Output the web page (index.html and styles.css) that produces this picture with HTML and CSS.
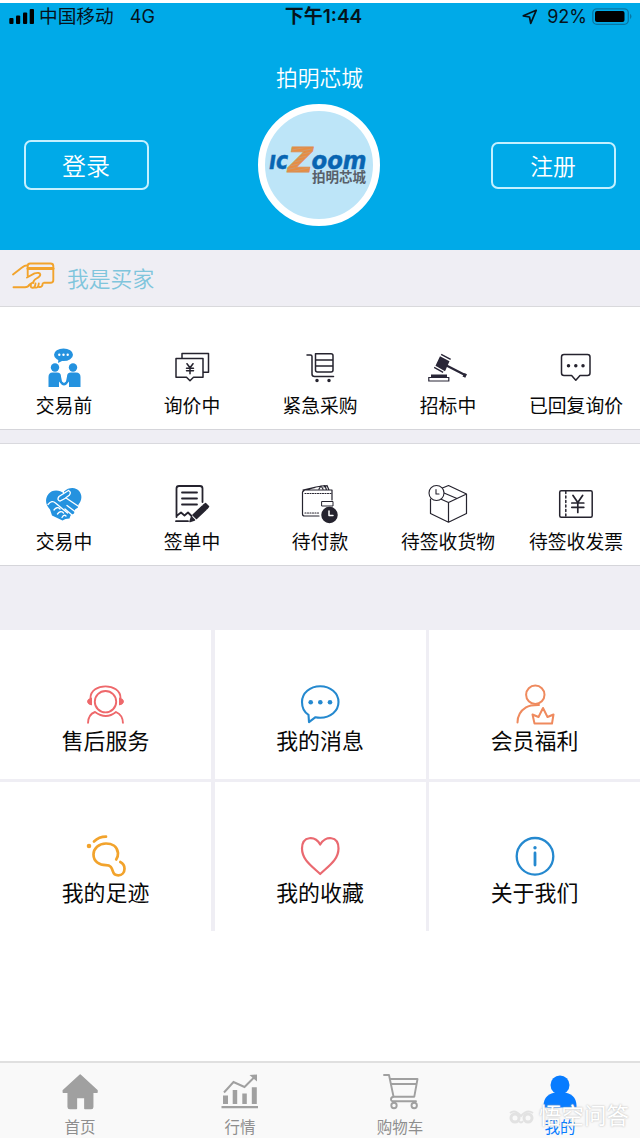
FILE: index.html
```html
<!DOCTYPE html>
<html lang="zh-CN">
<head>
<meta charset="utf-8">
<title>拍明芯城</title>
<link rel="stylesheet" href="styles.css">
</head>
<body>
<div class="app">
  <header class="hero">
    <div class="status">
      <div class="status-side">
        <svg class="signal" width="26" height="17" viewBox="9 7 26 17"><rect x="9.300" y="17" width="4.200" height="6" rx="1"/><rect x="16" y="14.500" width="4.200" height="8.500" rx="1"/><rect x="23" y="11.500" width="4.200" height="11.500" rx="1"/><rect x="29.700" y="8" width="4.300" height="15" rx="1"/></svg>
        <span class="carrier">中国移动</span><span class="network">4G</span>
      </div>
      <div class="clock">下午1:44</div>
      <div class="status-side status-right">
        <svg width="16" height="16" viewBox="524 8 16 16"><path d="M538.200 9.300 525.300 14.800 531.500 16 532.700 22.300Z" fill="none" stroke="#06131b" stroke-width="1.700" stroke-linejoin="round"/></svg>
        <span class="percent">92%</span>
        <svg width="41" height="18" viewBox="592 7 41 18"><rect x="592.800" y="7.800" width="35.500" height="15.500" rx="4" fill="none" stroke="#0876a3" stroke-width="1.300"/><rect x="595" y="10" width="29.500" height="11" rx="2" fill="#000"/><path d="M630 12.800q3 2.500 0 5.500z" fill="#0876a3"/></svg>
      </div>
    </div>
    <h1 class="title">拍明芯城</h1>
    <div class="account">
      <button class="btn">登录</button>
      <div class="avatar">
        <svg width="108" height="108" viewBox="265 111 108 108">
          <defs><pattern id="stripes" width="3" height="3" patternUnits="userSpaceOnUse" patternTransform="rotate(-12)"><rect width="3" height="3" fill="#e88d42"/><rect width="3" height="1" fill="#d09a6c"/></pattern></defs>
          <text class="logo-blue" x="269" y="169" font-size="25" textLength="19" lengthAdjust="spacingAndGlyphs">ıc</text>
          <text class="logo-blue" x="311.500" y="169" font-size="25" textLength="55" lengthAdjust="spacingAndGlyphs">oom</text>
          <text class="logo-z" x="288" y="171.500" font-size="33" fill="url(#stripes)" textLength="25" lengthAdjust="spacingAndGlyphs">Z</text>
          <text class="logo-cn" x="312" y="182.300" font-size="13.500">拍明芯城</text>
        </svg>
      </div>
      <button class="btn btn-register">注册</button>
    </div>
  </header>

  <div class="role">
    <svg width="44" height="32" viewBox="11 261 44 32" fill="none" stroke="#f2a32c" stroke-width="1.900" stroke-linecap="round" stroke-linejoin="round"><path d="M27.700 275.500V266q0-2.500 2.500-2.500h20.300q2.800 0 2.800 2.500v14.200q0 2.500-2.800 2.500H44M13 274.500l9-7q2.500-2.300 5.500-2.300M13.500 287.300h11.500q3 0 4.500-2.800l4-2.500M27 277.500l7.500-4.200q5.500-1.300 5.800 1.200 0 2-3.800 4-3 1.500-3.300 4.500M31 284.500q-1 3 1.500 3.300t3-4.300M34.800 287.300q3.500 1.500 4-3.800M39 287q3.500.5 3.700-3.500"/><path d="M28 268.500h25" stroke-width="3"/></svg>
    <span>我是买家</span>
  </div>

  <section class="orders">
    <div class="order"><svg viewBox="40 345 48 46" fill="#2492df"><ellipse cx="63.500" cy="354.800" rx="9.500" ry="6.300"/><path d="m58.500 359-.5 4 5-2.500z"/><g fill="#fff"><circle cx="59.300" cy="354.800" r="1.200"/><circle cx="63.500" cy="354.800" r="1.200"/><circle cx="67.700" cy="354.800" r="1.200"/></g><circle cx="55" cy="367.500" r="4.200"/><circle cx="73" cy="367.500" r="4.200"/><path d="M48.500 387V377q0-4.500 4-4.500h4.500q4 0 4 4l1 5 2 1.500 2-1.500 1-5q0-4 4-4h5q4.500 0 4.500 4.500v10H69V381.500l-2.500 3q-2.500 2-5 0L59 381.500v5.500z"/></svg><span>交易前</span></div>
    <div class="order"><svg viewBox="168 345 48 46" class="line"><path d="M182 357.500v-4h26.500v18.700H204M176 358.500h27v18.700h-9.500L190 380.700l-3.500-3.500H176zM187 363.700l3 4 3-4M190 367.700v6M186.500 368.200h7M186.500 370.700h7"/></svg><span>询价中</span></div>
    <div class="order"><svg viewBox="296 345 48 46" class="line"><path d="M307 355h3.500q1.500 0 1.500 1.500V374q0 2.500 2.500 2.500H333.500M315.500 353.700H331q2 0 2 2V370q0 2-2 2H317.500q-2 0-2-2zM315.500 360H333M315.500 366H333"/><circle cx="317" cy="380.500" r="1" fill="#25232e"/><circle cx="329" cy="380.500" r="1" fill="#25232e"/></svg><span>紧急采购</span></div>
    <div class="order"><svg viewBox="424 345 48 46" fill="#292637"><path d="m440 356.300 9.500 5-4.500 10-9.500-5.500zM441.500 353.800l9.500 5-.7 1.200-9.500-5zM434.500 366.800l9 5-.7 1.200-9-5zM447 364.500l18.500 9.500-1 2-18.500-9.500zM464.500 373l2.500 1.200-1.700 3.600-2.800-1.400zM431 374.500h16v2.500h-16z"/><path d="M428.800 377.500h20v3.500h-20z" fill="none" stroke="#292637" stroke-width="1.200"/></svg><span>招标中</span></div>
    <div class="order"><svg viewBox="552 345 48 46" class="line"><path d="M564 354.500h23.500q2.500 0 2.500 2.500v16q0 2.500-2.500 2.500H580l-4.200 4.800-4.200-4.800H564q-2.500 0-2.500-2.500v-16q0-2.500 2.500-2.500z"/><g fill="#25232e"><circle cx="568.500" cy="365.700" r="1"/><circle cx="575.800" cy="365.700" r="1"/><circle cx="583" cy="365.700" r="1"/></g></svg><span>已回复询价</span></div>
  </section>

  <section class="orders orders-active">
    <div class="order"><svg viewBox="40 481 48 46"><path d="M64 491.500c5-5 12.500-4.500 15.500 0 3.500 5 1.500 10-1 13l-.5 3-3 2-1 4-3.500 2-1 3-4 .5-3 1.500-10.500-5-2-6c-5-5-5-11-1.500-15.500 3.500-4.500 11-4.500 15.500-.5z" fill="#2492df"/><g fill="none" stroke="#fff" stroke-width="1.300" stroke-linecap="round"><path d="m68.500 490.500-9.500 6q-2.500 3.500 1 4.500l6-3 13.500 9M48 504.500q4-5 7.500-1.500l12 10M54 510q3-4 6-1M57.500 514q3-4 6-1M62 517.500q2-3.500 4-1.500M67 505.500l8 6M65 509l7 6M68.500 490.500q3 1.500 1 4.500l-4 3"/></g></svg><span>交易中</span></div>
    <div class="order"><svg viewBox="168 481 48 46" class="line"><path d="M176.500 517V488.500q0-2.500 2.500-2.500h21q2.500 0 2.500 2.500V502M176.500 516l4.500-3.500 3.500 3 3.500-3 3.500 3.500M182 492.500h15M182 498.500h15M182 504.500h15M176 521.200h12" stroke-width="1.800"/><path d="m202.500 506 3.500 3.500-9.500 9-3.500-3.500zM205.500 503.500l3 3-1.500 2-3.500-3.500zM191.500 517l3 3-4.500 1.500z" fill="#25232e"/></svg><span>签单中</span></div>
    <div class="order"><svg viewBox="296 481 48 46" class="line"><path d="M332 500v-10H304.500l-2 2V514q0 2 2 2H319M303 490l13-3 9-1.500 1.500 4.500M305 490l10-2.500M319 489l2-3 2 3M324 487l3-1.500 2 4.500" stroke-width="1.200"/><path d="M305 493.500h26M305 513h14" stroke-width="1.200" stroke-dasharray="1 1.500"/><path d="M322 501.500h11v4.500h-11z" stroke-width="1"/><circle cx="329.500" cy="515" r="7.500" fill="#25232e"/><path d="M329 511v4.500h4" stroke="#fff"/></svg><span>待付款</span></div>
    <div class="order"><svg viewBox="424 481 48 46" class="line"><path d="M430.500 499v14.500l18 8.700 18-8.700V494l-18 8.500-18-8M440 489l8.500-3.500 18 8.500M444 493l13 5.500M448.500 502.500v19.700" stroke-width="1.200"/><circle cx="436.500" cy="493" r="7.500" fill="#fff" stroke-width="1.100"/><path d="M436 489.500v4.500h3" stroke-width="1.100"/></svg><span>待签收货物</span></div>
    <div class="order"><svg viewBox="552 481 48 46" class="line"><rect x="559.700" y="490.700" width="32.500" height="26.500" rx="1.500"/><path d="M565.800 491.500v25" stroke-dasharray="2 2.500"/><path d="m573 495.500 4.800 7 4.800-7M577.800 502.500V512.500M571.800 503h12M571.800 507.300h12" stroke-width="1.700"/></svg><span>待签收发票</span></div>
  </section>

  <section class="services">
    <div class="service"><svg viewBox="82 682 48 44" fill="none" stroke="#ee686b" stroke-width="1.900"><circle cx="105.500" cy="701.700" r="10.700"/><path d="M90.500 698c0-15.500 30-15.500 30 0M88 723.500q0-9 7-11.500 11 8 21 0 7 3 7 11.500"/><path d="M91.500 698v7q-4-1-4-3.500t4-3.500zM119.500 698v7q4-1 4-3.500t-4-3.500z" fill="#ee686b" stroke-width="1"/></svg><span>售后服务</span></div>
    <div class="service"><svg viewBox="296 682 48 44" fill="none" stroke="#2589cf" stroke-width="2.100" stroke-linejoin="round"><path d="M308.500 714.800C303 711.500 302 707 302 702c0-9 8-15.700 18.200-15.700S338.500 693 338.500 702s-8 15.700-18.300 15.700q-2.500 0-4.700-.5l-6.500 5z"/><g fill="#2589cf" stroke="none"><circle cx="310.700" cy="702.300" r="2.300"/><circle cx="320.300" cy="702.300" r="2.300"/><circle cx="330" cy="702.300" r="2.300"/></g></svg><span>我的消息</span></div>
    <div class="service"><svg viewBox="510 682 48 44" fill="none" stroke="#ef8a5e" stroke-width="2" stroke-linecap="round" stroke-linejoin="round"><circle cx="534.300" cy="694.800" r="9.200"/><path d="M516.500 722.500q0-10 8.500-15.200 4-2.400 13-2.300M531.500 714.500l6 2.500 4.500-9 4.500 9 6-2.500-1.500 9h-17.500z"/></svg><span>会员福利</span></div>
    <div class="service"><svg viewBox="82 834 48 44" fill="none" stroke="#f2a32c" stroke-width="2.700" stroke-linecap="round"><circle cx="89" cy="846" r="1.300" fill="#f2a32c" stroke-width="2"/><path d="M94 841.500q5-4.800 12-4.800M116.200 859.500q2-3 1.800-6.500c-.8-7-6.500-9.500-12-9.500-7.300 0-12.500 5-12.500 11 0 7 6 10.700 12.300 10.700 5 0 6 2.500 7 6 .8 2.800 3 4.200 5.500 4.200 3.700 0 6.200-3 6.200-6.700 0-3-1.700-5.500-4.200-6.700"/></svg><span>我的足迹</span></div>
    <div class="service"><svg viewBox="296 834 48 44" fill="none" stroke="#ea6970" stroke-width="2.200" stroke-linejoin="round"><path d="M320.200 844.500c-5-9-18-9-18.200 4 0 11 9 17 18.200 25.500 9-8.500 18.300-14.500 18.300-25.500 0-13-13.300-13-18.300-4z"/></svg><span>我的收藏</span></div>
    <div class="service"><svg viewBox="510.500 834 48 44" fill="none" stroke="#2589cf" stroke-width="2.300" stroke-linecap="round"><circle cx="534.500" cy="856.300" r="18.300"/><path d="M534.500 853v12" stroke-width="2.800"/><circle cx="534.500" cy="847.800" r="1.700" fill="#2589cf" stroke="none"/></svg><span>关于我们</span></div>
  </section>

  <nav class="tabs">
    <div class="tab"><svg viewBox="56 1070 48 44" fill="#a0a0a0" stroke="#a0a0a0" stroke-width="1.500" stroke-linejoin="round"><path d="M80.200 1075 97 1090.500v1.800h-4.300v14.700q0 1.500-1.500 1.500h-6.300V1097.500h-8.500v11h-6.500q-1.700 0-1.700-1.500v-14.700H63.300v-1.800z"/></svg><span>首页</span></div>
    <div class="tab"><svg viewBox="216 1070 48 44" fill="#a0a0a0"><path d="M223 1095.500h5v8.500h-5zM232.700 1090h4.500v14h-4.500zM242.300 1093.500h4.500v10.500h-4.500zM251.800 1087.200h5V1104h-5zM221.500 1106h36.500v2.300h-36.500zM249.500 1075l7.500-.5v7z"/><path d="m224 1092.500 9.500-10.500 11 5 10-10" fill="none" stroke="#a0a0a0" stroke-width="2"/></svg><span>行情</span></div>
    <div class="tab"><svg viewBox="376 1070 48 44" fill="none" stroke="#a0a0a0" stroke-width="1.900" stroke-linecap="round" stroke-linejoin="round"><path d="M384 1075h5l4.500 21.500M390.500 1079H417.500l-3.200 17.700H394q-3 .3-3 2.500t2.500 2.100H416M391.300 1084h25"/><circle cx="394" cy="1105.500" r="2.700"/><circle cx="414.200" cy="1105.500" r="2.700"/></svg><span>购物车</span></div>
    <div class="tab selected"><svg viewBox="536 1070 48 44" fill="#087cff"><ellipse cx="560" cy="1085" rx="9.500" ry="9.500"/><path d="M543.500 1105.500c0-8 6-13 13-13h7c7 0 13 5 13 13v2h-33z"/></svg><span>我的</span></div>
    <div class="watermark"><svg width="30" height="22" viewBox="507 1106 30 22" fill="none" stroke="#e2e2e2" stroke-width="3"><circle cx="515" cy="1118" r="4"/><circle cx="528" cy="1118" r="4"/><path d="M510 1113q5-4 11 3 6-7 12-3M519 1121q2 3 4 0" stroke-width="2"/></svg><span>悟空问答</span></div>
  </nav>
</div>
</body>
</html>
```
FILE: styles.css
```css
* { box-sizing: border-box; }
body { margin: 0; background: #fff; color: #080808; font-family: "Liberation Sans", "Noto Sans CJK SC", sans-serif; }
.app { width: 640px; height: 1138px; display: flex; flex-direction: column; overflow: hidden; padding-top: 3px; }
svg { display: block; flex: none; }
.hero { height: 247px; flex: none; background: #00aae8; color: #fff; }
.status { height: 28px; display: grid; grid-template-columns: 1fr auto 1fr; align-items: center; padding: 0 7px 1px 9px; color: #06131b; font-size: 18.700px; line-height: 26px; }
.status-side { display: flex; align-items: center; }
.carrier { margin-left: 4px; }
.network { margin-left: 16px; font-family: Inter, sans-serif; font-size: 18px; }
.clock { padding-left: 5px; font-family: Inter, "Noto Sans CJK SC", sans-serif; font-weight: 600; font-size: 19px; }
.status-right { justify-content: flex-end; }
.percent { font-family: Inter, sans-serif; font-size: 18px; margin: 0 5px 0 9px; }
.title { margin: 32px 0 0; padding-right: 1px; font-size: 21.800px; line-height: 32px; font-weight: 350; text-align: center; }
.account { display: flex; justify-content: space-between; padding: 9px 24px 0; }
.btn { width: 125px; height: 50px; margin-top: 36px; padding: 0 1px 0 0; border: 2px solid #c4f0ff; border-radius: 7px; background: none; color: #fff; font: 350 24px/44px "Noto Sans CJK SC", sans-serif; }
.btn-register { height: 47px; margin-top: 38px; font-size: 22.800px; line-height: 41px; }
.avatar { position: relative; left: -1px; width: 122px; height: 122px; border: 7px solid #fff; border-radius: 50%; background: #bde5f8; }
.logo-blue { font-family: "DejaVu Sans", sans-serif; font-weight: 700; font-style: italic; fill: #0865b2; stroke: #0865b2; stroke-width: .5; }
.logo-z { font-family: "DejaVu Sans", sans-serif; font-weight: 700; font-style: italic; stroke: #dc8d4e; stroke-width: .8; }
.logo-cn { font-family: "Noto Sans CJK SC", sans-serif; font-weight: 700; fill: #58606a; }
.role { height: 57px; flex: none; display: flex; align-items: center; padding: 0 11px 2px; gap: 12px; background: #efeef4; border-bottom: 1px solid #d9d9dc; color: #7fc5dc; font-size: 21.800px; font-weight: 350; }
.orders { height: 123px; flex: none; display: grid; grid-template-columns: repeat(5, 1fr); border-bottom: 1px solid #d5d5da; }
.order { display: flex; flex-direction: column; align-items: center; padding-top: 38px; font-size: 18.800px; line-height: 32px; white-space: nowrap; }
.order svg { width: 48px; height: 46px; }
.line { fill: none; stroke: #25232e; stroke-width: 1.500; stroke-linejoin: round; stroke-linecap: round; }
.orders-active { height: 136px; border-top: 13px solid #efeef4; box-shadow: inset 0 1px #d9d9de; }
.services { height: 365px; flex: none; display: grid; grid-template-columns: 211px 211px 211px; grid-template-rows: 149px 149px; column-gap: 3.500px; row-gap: 3px; border-top: 64px solid #efeef4; background: #efeef4; }
.service { display: flex; flex-direction: column; align-items: center; padding-top: 52px; background: #fff; font-size: 21.900px; line-height: 32px; }
.service svg { width: 48px; height: 44px; }
.tabs { height: 77px; flex: none; display: grid; grid-template-columns: repeat(4, 1fr); margin-top: auto; border-top: 2px solid #e0e0e0; background: #f9f9f9; position: relative; color: #8e8e8e; }
.tab { display: flex; flex-direction: column; align-items: center; padding-top: 7px; font-size: 15.500px; line-height: 28px; }
.tab svg { width: 48px; height: 44px; }
.selected { color: #087cff; }
.watermark { position: absolute; left: 507px; top: 39px; display: flex; align-items: center; gap: 2px; font-size: 22.500px; line-height: 30px; color: #fff; text-shadow: 0 0 2px #aaa; }
```
